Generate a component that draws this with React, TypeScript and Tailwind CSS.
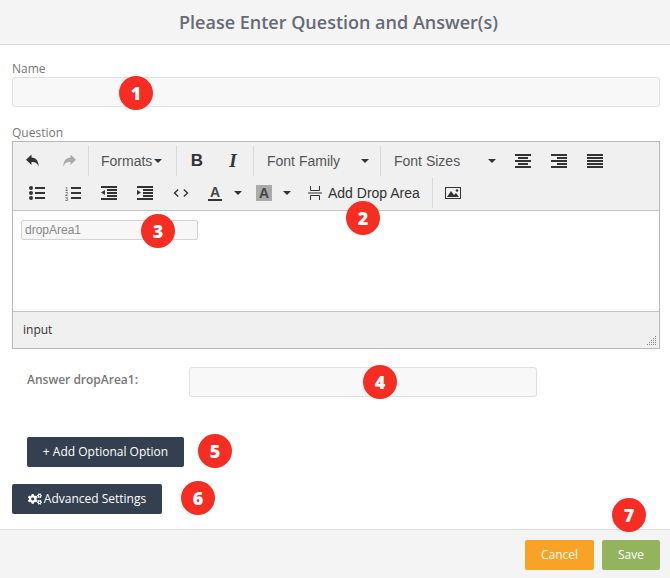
import type { FC, ReactNode } from "react";
import { FaCogs } from "react-icons/fa";

const SANS = "font-['Open_Sans',sans-serif]";
const ARIAL = "font-['Liberation_Sans',Arial,sans-serif]";

const Sep: FC<{ className?: string }> = ({ className }) => (
  <div className={`h-[30px] w-px flex-none bg-[#d9d9d9] ${className ?? ""}`} />
);

const Caret: FC<{ className?: string }> = ({ className }) => (
  <span className={`h-0 w-0 flex-none border-x-4 border-t-4 border-x-transparent border-t-[#333] ${className ?? ""}`} />
);

const Icon: FC<{ children: ReactNode; className?: string }> = ({ children, className }) => (
  <div className={`flex h-[30px] w-9 flex-none items-center justify-center ${className ?? ""}`}>
    <svg width="16" height="16" viewBox="0 0 16 16" fill="#333">
      {children}
    </svg>
  </div>
);

const Lines: FC<{ rows: [number, number][] }> = ({ rows }) => (
  <>
    {rows.map(([x, w], i) => (
      <rect key={i} x={x} y={1 + i * 3} width={w} height="2" />
    ))}
  </>
);

const Select: FC<{ label: string; width: string; caretGap: string }> = ({ label, width, caretGap }) => (
  <div className={`flex h-[30px] flex-none items-center pl-[13px] text-[14px] text-[#555] ${width}`}>
    <span>{label}</span>
    <Caret className={caretGap} />
  </div>
);

const Badge: FC<{ n: number; className: string }> = ({ n, className }) => (
  <div
    className={`absolute flex h-[34px] w-[34px] items-center justify-center rounded-full bg-[#f52d23] text-[18px] font-black text-white ${SANS} ${className}`}
  >
    {n}
  </div>
);

export default function App() {
  return (
    <div className={`relative flex h-[578px] w-[670px] flex-col overflow-hidden bg-white ${SANS}`}>
      <header className="flex h-[45px] flex-none items-center justify-center border-b border-[#dcdcdc] bg-[#f4f4f4] pl-[7px] text-[18px] font-semibold text-[#676a75]">
        Please Enter Question and Answer(s)
      </header>

      <main className="flex flex-1 flex-col pl-3 pr-[10px]">
        <label className="mt-[15px] h-[17px] text-[12px] leading-[17px] text-[#777]">Name</label>
        <div className="h-[30px] flex-none rounded-[3px] border border-[#e0e0e0] bg-[#f8f8f8]" />

        <label className="mt-[17px] h-[17px] text-[12px] leading-[17px] text-[#777]">Question</label>
        <div className={`flex h-[208px] flex-none flex-col border border-[#b9b9b9] ${ARIAL}`}>
          <div className="flex h-[69px] flex-none flex-col border-b border-[#c5c5c5] bg-[#f0f0f0] pt-1">
            <div className="flex h-[30px] items-center pl-[2px]">
              <Icon>
                <path d="M6.5 1.5 1 6.8l5.5 5.2V9c3.6-.2 5.8.9 7.2 4.5C13.6 8 11 4.6 6.5 4.4z" />
              </Icon>
              <Icon>
                <path fill="#aaa" d="M9.5 1.5 15 6.8 9.5 12V9c-3.6-.2-5.8.9-7.2 4.5C2.4 8 5 4.6 9.5 4.4z" />
              </Icon>
              <Sep className="ml-px" />
              <div className="flex h-[30px] w-[87px] flex-none items-center gap-[2px] pl-3 text-[14px] text-[#555]">
                <span>Formats</span>
                <Caret />
              </div>
              <Sep />
              <div className={`ml-[2px] flex h-[30px] w-9 flex-none items-center justify-center text-[17px] font-bold text-[#333] ${ARIAL}`}>
                B
              </div>
              <div className="flex h-[30px] w-9 flex-none items-center justify-center font-['Liberation_Serif',serif] text-[19px] font-bold italic text-[#333]">
                I
              </div>
              <div className="w-[2px] flex-none" />
              <Sep />
              <Select label="Font Family" width="w-[126px]" caretGap="ml-[21px]" />
              <Sep />
              <Select label="Font Sizes" width="w-[124px]" caretGap="ml-[28px]" />
              <Icon>
                <Lines rows={[[0, 16], [3, 10], [0, 16], [3, 10], [0, 16]]} />
              </Icon>
              <Icon>
                <Lines rows={[[0, 16], [6, 10], [0, 16], [6, 10], [0, 16]]} />
              </Icon>
              <Icon>
                <Lines rows={[[0, 16], [0, 16], [0, 16], [0, 16], [0, 16]]} />
              </Icon>
            </div>
            <div className="mt-[2px] flex h-[30px] items-center pl-[6px]">
              <Icon>
                <circle cx="2" cy="3" r="2" />
                <circle cx="2" cy="8" r="2" />
                <circle cx="2" cy="13" r="2" />
                <rect x="6" y="2" width="10" height="2" />
                <rect x="6" y="7" width="10" height="2" />
                <rect x="6" y="12" width="10" height="2" />
              </Icon>
              <Icon>
                <text x="0" y="5.5" fontSize="5.5" fontFamily="Liberation Sans">1</text>
                <text x="0" y="10.5" fontSize="5.5" fontFamily="Liberation Sans">2</text>
                <text x="0" y="15.5" fontSize="5.5" fontFamily="Liberation Sans">3</text>
                <rect x="6" y="2" width="10" height="2" />
                <rect x="6" y="7" width="10" height="2" />
                <rect x="6" y="12" width="10" height="2" />
              </Icon>
              <Icon>
                <rect x="0" y="1" width="16" height="2" />
                <rect x="6" y="4" width="10" height="2" />
                <rect x="6" y="7" width="10" height="2" />
                <rect x="6" y="10" width="10" height="2" />
                <rect x="0" y="13" width="16" height="2" />
                <path d="M4 5v5L0 7.5z" />
              </Icon>
              <Icon>
                <rect x="0" y="1" width="16" height="2" />
                <rect x="6" y="4" width="10" height="2" />
                <rect x="6" y="7" width="10" height="2" />
                <rect x="6" y="10" width="10" height="2" />
                <rect x="0" y="13" width="16" height="2" />
                <path d="M0 5v5l4-2.5z" />
              </Icon>
              <Icon>
                <path d="M5.2 4.5 1.5 8l3.7 3.5M10.8 4.5 14.5 8l-3.7 3.5" fill="none" stroke="#333" strokeWidth="1.4" />
              </Icon>
              <div className="flex h-[30px] w-[52px] flex-none items-center pl-[9px]">
                <span className="flex h-4 w-[14px] items-center justify-center border-b-2 border-[#333] text-[14px] font-bold leading-none text-[#444]">
                  A
                </span>
                <Caret className="ml-3" />
              </div>
              <div className="flex h-[30px] w-[49px] flex-none items-center pl-[5px]">
                <span className="flex h-4 w-4 items-center justify-center bg-[#aaa] text-[14px] font-bold leading-none text-[#444]">
                  A
                </span>
                <Caret className="ml-[11px]" />
              </div>
              <svg width="16" height="16" viewBox="0 0 16 16" className="ml-[7px] flex-none" fill="none" stroke="#333" strokeWidth="1">
                <path d="M3.5 1v4.5h9V1M1 8h14M3.5 15v-4.5h9V15" />
              </svg>
              <span className="ml-[5px] w-[104px] flex-none whitespace-nowrap text-[14px] text-[#333]">Add Drop Area</span>
              <Sep />
              <Icon className="ml-[2px]">
                <path fillRule="evenodd" d="M0 2h16v12H0zm1 1v10h14V3z" />
                <path d="M2 12l4-6 3 4 2-2 3 4z" />
                <circle cx="12" cy="5.5" r="1.3" />
              </Icon>
            </div>
          </div>

          <div className="min-h-0 flex-1 bg-white px-2 pt-[9px]">
            <div className="flex h-5 w-[177px] items-center rounded-[2px] border border-[#d4d4d4] bg-[#f7f7f7] px-[3px] text-[12px] text-[#888]">
              dropArea1
            </div>
          </div>

          <div className="relative flex h-[37px] flex-none items-center border-t border-[#c5c5c5] bg-[#f0f0f0] pl-[10px] text-[12px] text-[#333]">
            <span className={SANS}>input</span>
            <svg width="10" height="10" viewBox="0 0 10 10" fill="#888" className="absolute bottom-[2px] right-[2px]">
              <rect x="8" y="0" width="1" height="1" />
              <rect x="6" y="2" width="1" height="1" />
              <rect x="8" y="2" width="1" height="1" />
              <rect x="4" y="4" width="1" height="1" />
              <rect x="6" y="4" width="1" height="1" />
              <rect x="8" y="4" width="1" height="1" />
              <rect x="2" y="6" width="1" height="1" />
              <rect x="4" y="6" width="1" height="1" />
              <rect x="6" y="6" width="1" height="1" />
              <rect x="8" y="6" width="1" height="1" />
              <rect x="0" y="8" width="1" height="1" />
              <rect x="2" y="8" width="1" height="1" />
              <rect x="4" y="8" width="1" height="1" />
              <rect x="6" y="8" width="1" height="1" />
              <rect x="8" y="8" width="1" height="1" />
            </svg>
          </div>
        </div>

        <div className="ml-[15px] mt-[18px] flex items-start">
          <span className="w-[162px] flex-none pt-[4px] text-[12px] font-semibold text-[#777]">Answer dropArea1:</span>
          <div className="h-[30px] w-[348px] flex-none rounded-[3px] border border-[#e0e0e0] bg-[#f8f8f8]" />
        </div>

        <button className="ml-[15px] mt-10 flex h-[30px] w-[157px] items-center justify-center rounded-[2px] bg-[#34404f] text-[12px] font-medium text-white">
          + Add Optional Option
        </button>

        <button className="mt-[17px] flex h-[30px] w-[150px] items-center justify-center gap-[2px] rounded-[2px] bg-[#34404f] text-[12px] font-medium text-white">
          <FaCogs className="h-[14px] w-[14px]" />
          Advanced Settings
        </button>
      </main>

      <footer className="flex h-[49px] flex-none items-start justify-end gap-2 border-t border-[#dcdcdc] bg-[#f4f4f4] pr-[10px] pt-[10px] text-[12px] text-white">
        <button className="h-[30px] w-[69px] rounded-[2px] bg-[#f8a326]">Cancel</button>
        <button className="h-[30px] w-[58px] rounded-[2px] bg-[#93b35f]">Save</button>
      </footer>

      <Badge n={1} className="left-[119px] top-[76px]" />
      <Badge n={2} className="left-[346px] top-[201px]" />
      <Badge n={3} className="left-[141px] top-[214px]" />
      <Badge n={4} className="left-[363px] top-[365px]" />
      <Badge n={5} className="left-[198px] top-[434px]" />
      <Badge n={6} className="left-[181px] top-[481px]" />
      <Badge n={7} className="left-[612px] top-[498px]" />
    </div>
  );
}
